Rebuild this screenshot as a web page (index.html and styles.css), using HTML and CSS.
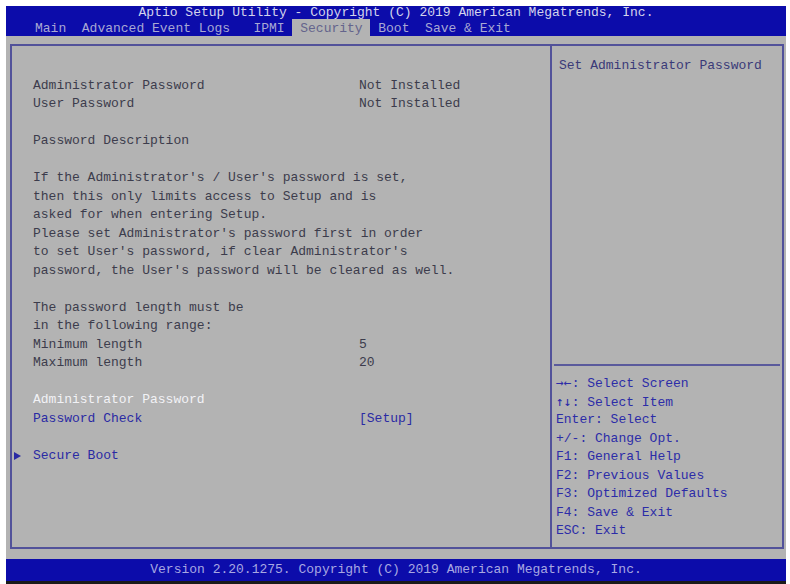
FILE: index.html
```html
<!DOCTYPE html>
<html lang="en">
<head>
  <meta charset="UTF-8">
  <title>Aptio Setup Utility - Security</title>
  <link rel="stylesheet" href="styles.css">
</head>
<body>
  <div class="screen">
    <div class="header">
      <div class="title">Aptio Setup Utility - Copyright (C) 2019 American Megatrends, Inc.</div>
      <div class="tabs">Main  Advanced Event Logs   IPMI <span class="tab-active"> Security </span> Boot  Save &amp; Exit</div>
    </div>

    <div class="main">
      <div class="frame">
        <div class="settings">
          <div class="row"></div>
          <div class="row"><span class="label">Administrator Password</span><span class="value">Not Installed</span></div>
          <div class="row"><span class="label">User Password</span><span class="value">Not Installed</span></div>
          <div class="row"></div>
          <div class="row"><span class="label">Password Description</span></div>
          <div class="row"></div>
          <div class="row"><span class="label">If the Administrator's / User's password is set,</span></div>
          <div class="row"><span class="label">then this only limits access to Setup and is</span></div>
          <div class="row"><span class="label">asked for when entering Setup.</span></div>
          <div class="row"><span class="label">Please set Administrator's password first in order</span></div>
          <div class="row"><span class="label">to set User's password, if clear Administrator's</span></div>
          <div class="row"><span class="label">password, the User's password will be cleared as well.</span></div>
          <div class="row"></div>
          <div class="row"><span class="label">The password length must be</span></div>
          <div class="row"><span class="label">in the following range:</span></div>
          <div class="row"><span class="label">Minimum length</span><span class="value">5</span></div>
          <div class="row"><span class="label">Maximum length</span><span class="value">20</span></div>
          <div class="row"></div>
          <div class="row selected"><span class="label">Administrator Password</span></div>
          <div class="row option"><span class="label">Password Check</span><span class="value">[Setup]</span></div>
          <div class="row"></div>
          <div class="row option">
            <span class="marker"><svg width="7" height="8" viewBox="0 0 7 8"><path d="M0 0 L7 4 L0 8 Z" fill="#2a2aa4"/></svg></span>
            <span class="label">Secure Boot</span>
          </div>
        </div>

        <div class="side">
          <div class="help">Set Administrator Password</div>
          <div class="keys">
            <div class="row"><span class="arrows">&rarr;&larr;</span>: Select Screen</div>
            <div class="row"><span class="arrows">&uarr;&darr;</span>: Select Item</div>
            <div class="row">Enter: Select</div>
            <div class="row">+/-: Change Opt.</div>
            <div class="row">F1: General Help</div>
            <div class="row">F2: Previous Values</div>
            <div class="row">F3: Optimized Defaults</div>
            <div class="row">F4: Save &amp; Exit</div>
            <div class="row">ESC: Exit</div>
          </div>
        </div>
      </div>
    </div>

    <div class="footer">Version 2.20.1275. Copyright (C) 2019 American Megatrends, Inc.</div>
    <div class="bottom-edge"></div>
  </div>
</body>
</html>
```

FILE: styles.css
```css
* {
  box-sizing: border-box;
}
body {
  margin: 0;
  background: #fff;
  font-family: "Liberation Mono", "DejaVu Sans Mono", monospace;
  font-size: 13px;
}
.screen {
  margin: 6px 0 0 6px;
  width: 780px;
  background: #b3b3b3;
}
.header {
  background: #0c0caa;
  height: 30px;
}
.title {
  height: 13px;
  line-height: 13px;
  text-align: center;
  color: #d4d4ec;
  white-space: pre;
}
.tabs {
  height: 17px;
  line-height: 15px;
  padding: 2px 0 0 29px;
  color: #a8a8d4;
  white-space: pre;
}
.tab-active {
  display: inline-block;
  vertical-align: top;
  height: 17px;
  margin-top: -2px;
  padding-top: 2px;
  background: #b3b3b3;
  color: #64648c;
}
.main {
  height: 523px;
  padding: 8px 2px 10px 4px;
}
.frame {
  height: 505px;
  border: 2px solid #52529a;
  display: grid;
  grid-template-columns: 538px 1fr;
}
.row {
  height: 18.5px;
  line-height: 18.5px;
  white-space: pre;
}
.settings {
  padding: 12px 0 0 2px;
  color: #3c3c4c;
}
.settings .row {
  display: grid;
  grid-template-columns: 19px 326px auto;
}
.settings .label {
  grid-column: 2;
}
.settings .value {
  grid-column: 3;
}
.marker {
  grid-column: 1;
  display: flex;
  align-items: center;
}
.selected {
  color: #f2f2f6;
}
.option {
  color: #2a2aa4;
}
.side {
  border-left: 2px solid #52529a;
  display: flex;
  flex-direction: column;
}
.help {
  height: 320px;
  padding: 11px 4px 0 5px;
  line-height: 18.5px;
  color: #3a3a78;
  border-bottom: 2px solid #5a5a9c;
  margin: 0 2px;
}
.keys {
  padding: 8px 4px 0 4px;
  color: #2c2ca8;
}
.arrows {
  font-family: "DejaVu Sans Mono", monospace;
}
.footer {
  height: 22px;
  line-height: 22px;
  background: #0c0caa;
  color: #a8a8e2;
  text-align: center;
  white-space: pre;
}
.bottom-edge {
  height: 3px;
  background: #1a1a1a;
}
```
